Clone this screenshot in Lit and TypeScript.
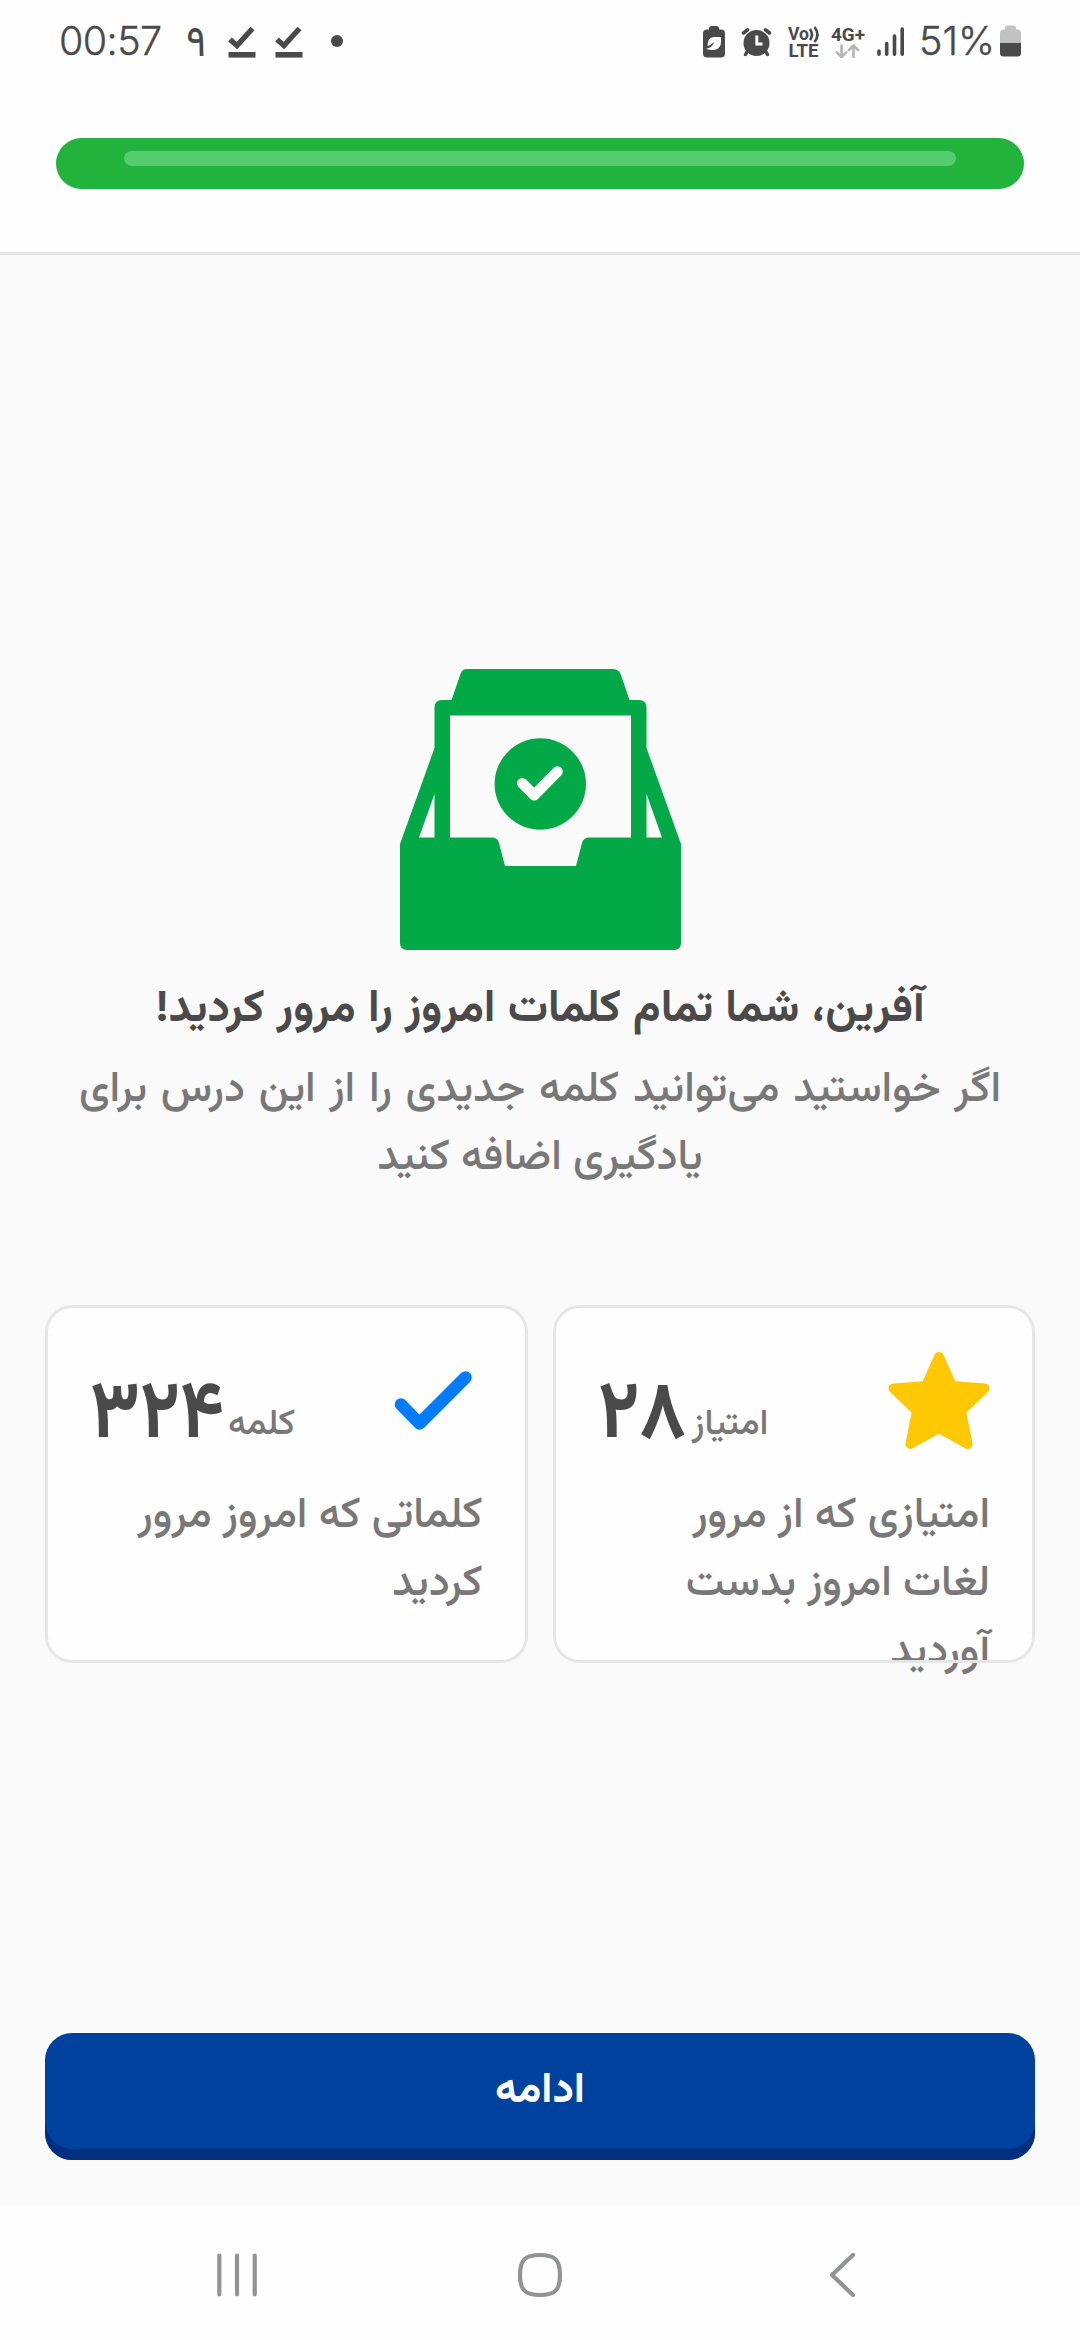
import { LitElement, html, css, svg } from "lit";
import { customElement, property } from "lit/decorators.js";
import { classMap } from "lit/directives/class-map.js";

const checkBadge = () => html`
  <svg class="check" viewBox="0 0 28 34" width="28" height="34">
    <path d="M2 14.5 L9 20.5 L24.5 3.5" fill="none" stroke="#4a4a4a" stroke-width="5.4" />
    <rect x="0.5" y="27" width="27" height="5.6" fill="#4a4a4a" />
  </svg>
`;

@customElement("status-bar")
class StatusBar extends LitElement {
  static styles = css`
    :host {
      display: flex;
      justify-content: space-between;
      align-items: center;
      height: 82px;
      padding: 0 56px 0 59px;
      box-sizing: border-box;
      color: #4a4a4a;
      font-family: Inter, Roboto, "Liberation Sans", sans-serif;
      font-size: 39.5px;
      font-weight: 350;
    }
    .left,
    .right {
      display: flex;
      align-items: center;
    }
    .time {
      width: 127px;
      letter-spacing: -0.6px;
      -webkit-text-stroke: 0.4px #4a4a4a;
    }
    .nine {
      width: 42px;
      margin-top: 10px;
      font-family: Vazirmatn, "Noto Sans Arabic", "DejaVu Sans", sans-serif;
      font-size: 43px;
      font-weight: 400;
      line-height: 60px;
    }
    .check {
      margin-right: 19px;
      margin-top: 2px;
    }
    .dot {
      width: 12px;
      height: 12px;
      border-radius: 50%;
      background: #4a4a4a;
      margin-left: 9px;
    }
    .percent {
      width: 76px;
      margin-right: 3px;
      white-space: nowrap;
      -webkit-text-stroke: 0.4px #4a4a4a;
    }
    svg {
      display: block;
    }
    .tiny {
      font-family: Roboto, "Liberation Sans", sans-serif;
      font-weight: 700;
    }
  `;

  render() {
    return html`
      <div class="left">
        <span class="time">00:57</span>
        <span class="nine">۹</span>
        ${checkBadge()}${checkBadge()}
        <span class="dot"></span>
      </div>
      <div class="right">
        <svg width="219" height="60" viewBox="700 11 219 60">
          <path
            d="M709 29.5 V28.5 Q709 26 711.5 26 H716.5 Q719 26 719 28.5 V29.5 H721 Q725 29.5 725 33.5 V53.5 Q725 57.5 721 57.5 H707 Q703 57.5 703 53.5 V33.5 Q703 29.5 707 29.5 Z"
            fill="#4a4a4a"
          />
          <path
            d="M721 37 H713.5 Q707.5 37.5 707.5 46 Q711 45 714 42 Q713 47.5 706 48.8 Q710 50.5 715 49.8 Q721 48 721 42 Z"
            fill="#fefefe"
          />
          <g fill="none" stroke="#4a4a4a" stroke-linecap="round">
            <path d="M743.5 33 L747.5 29.8 M769.5 33 L765.5 29.8" stroke-width="3.6" />
            <path d="M747.5 51 L745.5 54.5 M765.5 51 L767.5 54.5" stroke-width="3.4" />
          </g>
          <circle cx="756.5" cy="43" r="13" fill="#4a4a4a" />
          <path d="M756.8 35.5 V44 H762.5" fill="none" stroke="#fefefe" stroke-width="3" />
          <g class="tiny" fill="#4a4a4a" font-size="18">
            <text x="788" y="40" textLength="21" lengthAdjust="spacingAndGlyphs">Vo</text>
            <text x="788.5" y="57" textLength="30" lengthAdjust="spacingAndGlyphs">LTE</text>
            <text x="831" y="40.5" textLength="34" lengthAdjust="spacingAndGlyphs">4G+</text>
          </g>
          <g fill="none" stroke="#4a4a4a" stroke-width="2.6">
            <path d="M810 29 Q814 34.5 810 40" />
            <path d="M814.5 27 Q820.5 34.5 814.5 42" />
          </g>
          <g fill="none" stroke="#b4b6b5" stroke-width="2.6" stroke-linecap="round" stroke-linejoin="round">
            <path d="M841.5 45.5 V57 M836.8 52.3 L841.5 57 L846.2 52.3" />
            <path d="M853.5 57 V45.5 M848.8 50.2 L853.5 45.5 L858.2 50.2" />
          </g>
          <g fill="none" stroke="#4a4a4a" stroke-width="3.6" stroke-linecap="round">
            <path d="M879 51 V54.2 M886.7 43.5 V54.2 M894.5 36 V54.2 M902.2 29 V54.2" />
          </g>
        </svg>
        <span class="percent">51%</span>
        <svg width="26" height="34" viewBox="998 24 26 34">
          <path
            d="M1005 29.5 V28 Q1005 25.5 1007.5 25.5 H1013.5 Q1016 25.5 1016 28 V29.5 H1017 Q1021 29.5 1021 33.5 V43 H1000 V33.5 Q1000 29.5 1004 29.5 Z"
            fill="#c1c3c2"
          />
          <path d="M1000 43 H1021 V53 Q1021 56.5 1017.5 56.5 H1003.5 Q1000 56.5 1000 53 Z" fill="#4a4a4a" />
        </svg>
      </div>
    `;
  }
}

@customElement("stat-card")
class StatCard extends LitElement {
  @property() value = "";
  @property() unit = "";
  @property() note = "";
  @property() icon: "star" | "check" = "star";

  static styles = css`
    :host {
      display: block;
      position: relative;
      box-sizing: border-box;
      height: 358px;
      padding: 28px 45px 0 45px;
      border-radius: 27px;
      background: #fefefe;
    }
    :host::after {
      content: "";
      position: absolute;
      inset: 0;
      border: 3px solid #e5e6e6;
      border-radius: 27px;
    }
    .head {
      display: flex;
      justify-content: space-between;
      align-items: center;
      height: 136px;
    }
    .figure {
      display: flex;
      align-items: baseline;
      gap: 5px;
      margin-top: 34px;
      white-space: nowrap;
    }
    .value {
      font-size: 81px;
      font-weight: 700;
      line-height: 100px;
      color: #4a4a4a;
      margin-inline-start: -4px;
      transform: scaleX(0.945);
      transform-origin: left center;
    }
    .value.long {
      margin-inline-start: -14px;
      transform: scaleX(0.91);
    }
    .unit {
      font-size: 36px;
      font-weight: 500;
      color: #787878;
      transform: translateY(-3px);
    }
    .note {
      margin-top: 14px;
      padding-left: 20px;
      font-size: 43px;
      font-weight: 500;
      line-height: 68px;
      color: #787878;
    }
    svg {
      display: block;
    }
  `;

  render() {
    const shape =
      this.icon === "star"
        ? svg`<path d="M939.5 1357 L952.5 1386 L985 1388.5 L961.5 1411 L968 1444 L939.5 1428 L911 1444 L917.5 1411 L894 1388.5 L926.5 1386 Z"
            fill="#fec804" stroke="#fec804" stroke-width="10" stroke-linejoin="round" />`
        : svg`<path d="M908.5 1404.5 L927 1423.5 L973 1377.5" fill="none" stroke="#037bff" stroke-width="12.5"
            stroke-linecap="round" stroke-linejoin="round" />`;
    return html`
      <div class="head">
        <svg width="102" height="102" viewBox="888.5 1350 102 102">${shape}</svg>
        <div class="figure">
          <span class="unit">${this.unit}</span>
          <span class=${classMap({ value: true, long: this.value.length > 2 })}>${this.value}</span>
        </div>
      </div>
      <div class="note">${this.note}</div>
    `;
  }
}

@customElement("app-root")
class AppRoot extends LitElement {
  static styles = css`
    :host {
      display: flex;
      flex-direction: column;
      width: 1080px;
      height: 2340px;
      overflow: hidden;
      background: #fafafb;
      font-family: Vazirmatn, "Noto Sans Arabic", "DejaVu Sans", sans-serif;
    }
    header {
      height: 252px;
      background: #fefefe;
      border-bottom: 3px solid #e5e5e5;
    }
    .progress {
      margin: 56px 56px 0;
      height: 51px;
      border-radius: 26px;
      background: #21b33c;
      display: flex;
      padding: 13px 68px 0;
      box-sizing: border-box;
    }
    .shine {
      flex: 1;
      height: 15px;
      border-radius: 8px;
      background: #55cd6e;
    }
    main {
      flex: 1;
      display: flex;
      flex-direction: column;
      align-items: center;
      direction: rtl;
      padding: 414px 45px 0;
    }
    .tray {
      display: block;
    }
    h1 {
      margin: 26px 0 0;
      font-size: 45px;
      font-weight: 700;
      line-height: 68px;
      word-spacing: 0.9px;
      color: #4a4a4a;
      white-space: nowrap;
    }
    p {
      margin: 13px 0 0;
      width: 960px;
      text-align: center;
      font-size: 43px;
      font-weight: 500;
      line-height: 68px;
      color: #787878;
    }
    p::first-line {
      word-spacing: 2.6px;
    }
    .cards {
      display: grid;
      grid-template-columns: 1fr 1fr;
      gap: 25px;
      width: 990px;
      margin-top: 112px;
    }
    .next {
      box-sizing: border-box;
      width: 990px;
      height: 127px;
      margin-top: 370px;
      border: 0;
      border-radius: 27px;
      padding: 0 0 9px;
      background: #01429e;
      box-shadow: inset 0 -11px 0 #002e80;
      color: #fefefe;
      font: 700 43px/100px Vazirmatn, "Noto Sans Arabic", "DejaVu Sans", sans-serif;
    }
    nav {
      display: grid;
      grid-template-columns: 1fr 1fr 1fr;
      align-items: center;
      justify-items: center;
      height: 135px;
      padding: 4px 86px 0;
      background: #fefefe;
      fill: none;
      stroke: #929493;
      stroke-width: 4.2;
      stroke-linecap: round;
      stroke-linejoin: round;
      box-sizing: border-box;
    }
  `;

  render() {
    return html`
      <header>
        <status-bar></status-bar>
        <div class="progress"><div class="shine"></div></div>
      </header>
      <main>
        <svg class="tray" width="281" height="281" viewBox="400 669 281 281">
          <path
            d="M467 669 H613 Q619 669 621 675 L629.5 700 H639 Q646.5 700 646.5 707.5 V748 L681 844 V943 Q681 950 674 950 H407 Q400 950 400 943 V844 L434.5 748 V707.5 Q434.5 700 442 700 H451.5 L460.5 674 Q462 669 467 669 Z"
            fill="#04a947"
          />
          <g fill="#fafafb">
            <path d="M450 715.5 H631 V837.5 H589 Q583.5 837.5 582 843 L576 866 H505 L499 843 Q497.5 837.5 492 837.5 H450 Z" />
            <path d="M434.5 794 V837.5 H419 Z M646.5 794 V837.5 H662 Z" />
          </g>
          <circle cx="540.3" cy="784" r="45.7" fill="#04a947" />
          <path
            d="M522.3 783.3 L534.2 795.2 L557.5 771.5"
            fill="none"
            stroke="#fefefe"
            stroke-width="10.6"
            stroke-linecap="round"
            stroke-linejoin="round"
          />
        </svg>
        <h1>آفرین، شما تمام کلمات امروز را مرور کردید!</h1>
        <p>اگر خواستید می‌توانید کلمه جدیدی را از این درس برای یادگیری اضافه کنید</p>
        <div class="cards">
          <stat-card icon="star" value="۲۸" unit="امتیاز" note="امتیازی که از مرور لغات امروز بدست آوردید"></stat-card>
          <stat-card icon="check" value="۳۲۴" unit="کلمه" note="کلماتی که امروز مرور کردید"></stat-card>
        </div>
        <button class="next">ادامه</button>
      </main>
      <nav>
        <svg width="48" height="48" viewBox="0 0 48 48"><path d="M6.3 4.5 V43.5 M24 4.5 V43.5 M41.7 4.5 V43.5" /></svg>
        <svg width="48" height="48" viewBox="0 0 48 48">
          <path d="M24 4 C39 4 44 9 44 24 C44 39 39 44 24 44 C9 44 4 39 4 24 C4 9 9 4 24 4 Z" />
        </svg>
        <svg width="48" height="48" viewBox="0 0 48 48"><path d="M34 4 L13 24 L34 44" /></svg>
      </nav>
    `;
  }
}
